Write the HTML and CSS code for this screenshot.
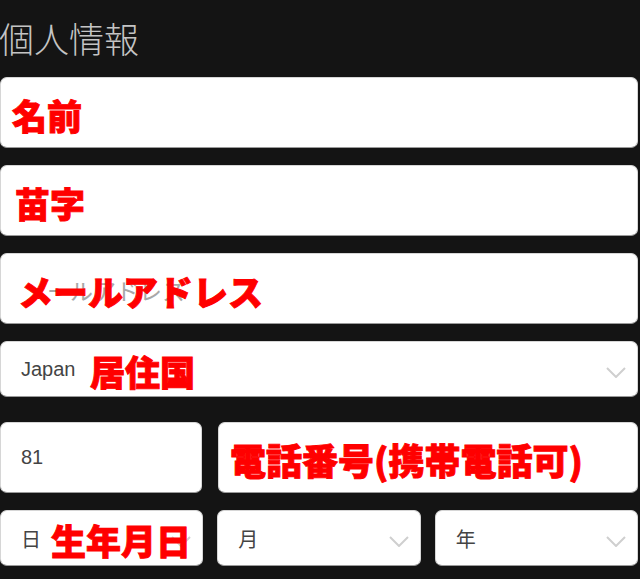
FILE: index.html
```html
<!DOCTYPE html>
<html lang="ja">
<head>
<meta charset="utf-8">
<title>個人情報</title>
<link rel="stylesheet" href="styles.css">
</head>
<body>
<div class="form">
  <h2 class="title">個人情報</h2>

  <div class="row row-first">
    <div class="box box-tall">
      <span class="note" style="left:11px">名前</span>
    </div>
  </div>

  <div class="row">
    <div class="box box-tall">
      <span class="note" style="left:14px">苗字</span>
    </div>
  </div>

  <div class="row">
    <div class="box box-tall">
      <span class="ph">メールアドレス</span>
      <span class="note" style="left:17px">メールアドレス</span>
    </div>
  </div>

  <div class="row">
    <div class="box box-select">
      <span class="val">Japan</span>
      <svg class="chev" viewBox="0 0 20 11" width="20" height="11"><polyline points="1,1 10,10 19,1" fill="none" stroke="#cfcfcf" stroke-width="2"/></svg>
      <span class="note" style="left:89px">居住国</span>
    </div>
  </div>

  <div class="row row-phone">
    <div class="box box-tall">
      <span class="val">81</span>
    </div>
    <div class="box box-tall">
      <span class="note note-wide" style="left:11px">電話番号(携帯電話可)</span>
    </div>
  </div>

  <div class="row row-date">
    <div class="box box-select">
      <span class="val">日</span>
      <svg class="chev" viewBox="0 0 20 11" width="20" height="11"><polyline points="1,1 10,10 19,1" fill="none" stroke="#cfcfcf" stroke-width="2"/></svg>
      <span class="note" style="left:50px">生年月日</span>
    </div>
    <div class="box box-select">
      <span class="val">月</span>
      <svg class="chev" viewBox="0 0 20 11" width="20" height="11"><polyline points="1,1 10,10 19,1" fill="none" stroke="#cfcfcf" stroke-width="2"/></svg>
    </div>
    <div class="box box-select">
      <span class="val">年</span>
      <svg class="chev" viewBox="0 0 20 11" width="20" height="11"><polyline points="1,1 10,10 19,1" fill="none" stroke="#cfcfcf" stroke-width="2"/></svg>
    </div>
  </div>
</div>
</body>
</html>
```

FILE: styles.css
```css
html, body {
  margin: 0;
  padding: 0;
  background: #141414;
}

body {
  font-family: "Liberation Sans", "Noto Sans CJK JP", sans-serif;
  height: 579px;
  overflow: hidden;
}

.form {
  width: 638px;
  display: flex;
  flex-direction: column;
}

.title {
  margin: 0;
  padding: 20px 0 0 0;
  height: 57px;
  box-sizing: border-box;
  font-family: "Noto Sans CJK JP", sans-serif;
  font-weight: 300;
  font-size: 35px;
  line-height: 36px;
  color: #c4c4c4;
  margin-left: -1px;
}

.row {
  margin-top: 17px;
}

.row-first {
  margin-top: 20px;
}

.row-phone {
  margin-top: 25px;
  display: grid;
  grid-template-columns: 202px 1fr;
  gap: 16px;
}

.row-date {
  margin-top: 17px;
  display: grid;
  grid-template-columns: 1fr 1fr 1fr;
  gap: 14px;
}

.box {
  position: relative;
  box-sizing: border-box;
  background: #ffffff;
  border: 1px solid #d6d6d6;
  border-bottom-color: #9a9a9a;
  border-radius: 7px;
  display: flex;
  align-items: center;
  padding: 0 19px;
}

.box-tall {
  height: 71px;
}

.box-select {
  height: 56px;
}

.val {
  font-family: "Liberation Sans", "Noto Sans CJK JP", sans-serif;
  font-size: 20px;
  color: #444444;
  margin-left: 1px;
}

.ph {
  font-family: "Liberation Sans", "Noto Sans CJK JP", sans-serif;
  font-size: 23px;
  color: #a8a8a8;
  margin-left: 4px;
  margin-top: 2px;
}

.chev {
  position: absolute;
  right: 11px;
  top: 50%;
  margin-top: -2px;
}

.note {
  position: absolute;
  top: 50%;
  transform: translateY(-50%);
  margin-top: 1px;
  font-family: "Noto Sans CJK JP", sans-serif;
  font-weight: 900;
  font-size: 35px;
  line-height: 1;
  color: #ff0000;
  -webkit-text-stroke: 0.9px #ff0000;
  white-space: nowrap;
}

.note-wide {
  font-size: 36px;
}
```
